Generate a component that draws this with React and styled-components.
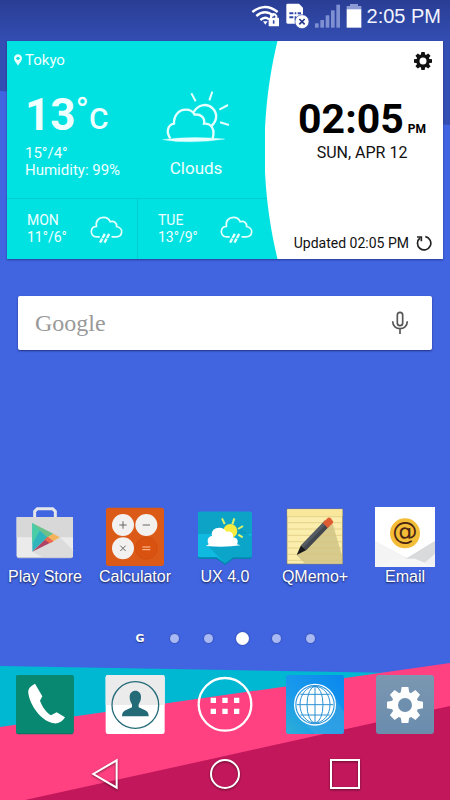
import React from 'react';
import styled, { createGlobalStyle } from 'styled-components';

const Backdrop = () => (
  <Wallpaper viewBox="0 0 450 800" preserveAspectRatio="none" aria-hidden="true">
    <defs>
      <linearGradient id="shade" x1="0" y1="0" x2="0" y2="1">
        <stop offset="0" stopColor="#293d94" />
        <stop offset="0.35" stopColor="#344fb4" />
        <stop offset="1" stopColor="#344fb4" />
      </linearGradient>
    </defs>
    <rect width="450" height="800" fill="#4164e1" />
    <path d="M0 0H450V125L0 91Z" fill="url(#shade)" />
    <path d="M0 666L400 673V800H0Z" fill="#00b8d2" />
    <path d="M0 727L450 663V800H0Z" fill="#ff4081" />
    <path d="M25 800L225 756L450 706V800Z" fill="#c2185b" />
  </Wallpaper>
);

const WifiIcon = () => (
  <svg width="29" height="24" viewBox="0 0 87 72" fill="none" stroke="#fff">
    <path d="M4 24Q42 -6 80 24M16 36Q42 14 68 36M28 48Q42 36 54 46" strokeWidth="7" />
    <path d="M36 52L43 62L50 52Z" fill="#fff" stroke="none" />
    <rect x="53" y="41" width="31" height="26" rx="2" fill="#fff" stroke="none" />
    <path d="M60 42V36Q68 24 76 36V42" strokeWidth="6" />
    <path d="M68 49V59" stroke="#3049a8" strokeWidth="5" />
  </svg>
);

const SimIcon = () => (
  <svg width="25" height="26" viewBox="0 0 75 78">
    <path d="M4 6Q4 2 8 2H42L54 14V58Q54 62 50 62H8Q4 62 4 58Z" fill="#fff" />
    <path
      d="M13 28H25V34H13ZM29 28H34V34H29ZM38 28H48V34H38ZM13 40H25V46H13ZM29 40H34V52H29Z"
      fill="#3049a8"
    />
    <circle cx="51" cy="56" r="21" fill="#fff" stroke="#3049a8" strokeWidth="2" />
    <path d="M43 48L59 64M59 48L43 64" stroke="#26398a" strokeWidth="5" />
  </svg>
);

const SignalIcon = () => (
  <svg width="26" height="24" viewBox="0 0 78 72" fill="#7e8fd2">
    <rect x="0" y="58" width="11" height="13" />
    <rect x="16" y="48" width="11" height="23" />
    <rect x="32" y="34" width="11" height="37" />
    <rect x="48" y="19" width="11" height="52" />
    <rect x="64" y="2" width="11" height="69" />
  </svg>
);

const BatteryIcon = () => (
  <svg width="16" height="24" viewBox="0 0 48 72">
    <path d="M12 0H36V6H46V18H2V6H12Z" fill="#8c9bd6" />
    <rect x="2" y="16" width="44" height="55" fill="#fff" />
  </svg>
);

const PinIcon = () => (
  <svg width="8" height="12" viewBox="0 0 24 34">
    <path d="M12 0C5 0 0 5 0 12C0 20 8 26 12 34C16 26 24 20 24 12C24 5 19 0 12 0Z" fill="#eafffe" />
    <circle cx="12" cy="12" r="5" fill="#00e2e2" />
  </svg>
);

const CloudSunIcon = () => (
  <svg width="72" height="57" viewBox="0 0 216 171" fill="none" stroke="#e4fffe" strokeWidth="7">
    <path d="M31 154C18 136 22 114 42 110C41 84 57 68 78 68C91 68 99 74 104 83C122 80 136 92 132 110C154 108 166 128 158 154" />
    <path d="M101 76C112 54 140 46 158 64C173 79 172 102 154 117" />
    <path d="M8 158Q96 146 194 156Q96 172 8 158Z" fill="#e4fffe" strokeWidth="1" />
    <path d="M94 19L107 43M157 14L148 40M178 68L204 54M180 106L207 114" strokeWidth="6" />
  </svg>
);

const RainIcon = () => (
  <svg width="33" height="27" viewBox="0 0 98 80" fill="none" stroke="#e4fffe" strokeWidth="5">
    <path d="M29 62H20C8 62 3 53 4 45C5 36 12 31 19 31C16 15 26 4 40 4C50 4 57 9 60 17C71 13 80 20 79 31C90 33 95 41 94 48C93 57 86 62 78 62H64" />
    <path d="M44 53L30 79M57 53L43 79" strokeWidth="7" strokeDasharray="14 2" />
  </svg>
);

const Gear = ({ size, color, hole }) => (
  <svg width={size} height={size} viewBox="-54 -54 108 108" fill={color}>
    <circle r="40" />
    {[0, 45, 90, 135].map(angle => (
      <path
        key={angle}
        d="M-10 -54H10L14 -30V30L10 54H-10L-14 30V-30Z"
        transform={`rotate(${angle})`}
      />
    ))}
    <circle r="21" fill={hole} />
  </svg>
);

const RefreshIcon = () => (
  <svg width="16" height="16" viewBox="0 0 48 48" fill="none" stroke="#222" strokeWidth="5">
    <path d="M28 5A20 20 0 1 1 12 9" />
    <path d="M3 6H16V19" />
  </svg>
);

const MicIcon = () => (
  <svg width="18" height="24" viewBox="0 0 54 72" fill="none" stroke="#555" strokeWidth="5">
    <rect x="19" y="4" width="16" height="40" rx="8" />
    <path d="M5 31C5 60 49 60 49 31M27 53V69" />
  </svg>
);

const PlayStoreIcon = () => (
  <Icon viewBox="0 0 180 180">
    <path d="M59 32V13L67 5H113L121 13V32" fill="none" stroke="#e4e6ea" strokeWidth="9" />
    <rect x="5" y="30" width="169" height="124" rx="6" fill="#b7bccb" />
    <path d="M5 30H174V145Q174 151 168 151H11Q5 151 5 145Z" fill="#ebebeb" />
    <path d="M5 30H174V91H5Z" fill="#d8d8d9" />
    <path d="M52 134L84 151H168Q174 151 174 145V130L135 91Z" fill="#dcdcdc" />
    <path d="M52 48L98 90L52 134Z" fill="#31b5bd" />
    <path d="M52 48L76 68L52 110Z" fill="#48cda6" />
    <path d="M52 48L115 80L98 92Z" fill="#6cc18b" />
    <path d="M115 80L135 91L115 103L98 90Z" fill="#f5b45c" />
    <path d="M52 134L98 90L115 103Z" fill="#b04465" />
    <path d="M98 90L115 103L104 109L89 98Z" fill="#ef6b4d" />
  </Icon>
);

const CalculatorIcon = () => (
  <Icon viewBox="0 0 180 180">
    <rect x="3" y="2" width="174" height="175" rx="8" fill="#dc5a18" />
    <g fill="#f3f1ef">
      <circle cx="54" cy="54" r="33" />
      <circle cx="124" cy="54" r="33" />
      <circle cx="54" cy="124" r="33" />
    </g>
    <circle cx="124" cy="124" r="33" fill="#d9520f" stroke="#cc4d10" strokeWidth="2" />
    <path
      d="M43 54H65M54 43V65M113 54H135M46 116L62 132M62 116L46 132"
      stroke="#666"
      strokeWidth="3"
    />
    <path d="M112 120H136M112 128H136" stroke="#ffc7a5" strokeWidth="3" />
  </Icon>
);

const WeatherAppIcon = () => (
  <Icon viewBox="0 0 180 180">
    <path d="M14 17H165Q170 17 170 22V150Q170 156 165 156H115L90 174L65 156H14Q9 156 9 150V22Q9 17 14 17Z" fill="#0483ad" />
    <path d="M14 14H165Q170 14 170 19V146Q170 151 165 151H115L90 169L65 151H14Q9 151 9 146V19Q9 14 14 14Z" fill="#0fb9df" />
    <path d="M14 14H165Q170 14 170 19V81H9V19Q9 14 14 14Z" fill="#0da3c6" />
    <path d="M37 115L72 151L90 169L115 151H170V90L126 56Z" fill="#0998bd" opacity="0.6" />
    <circle cx="106" cy="72" r="21" fill="#f7ec3f" />
    <path
      d="M81 34L89 51M118 34L112 52M129 66L144 57M130 83L143 91"
      stroke="#d9f36a"
      strokeWidth="6"
    />
    <path
      d="M33 117L41 112C34 98 41 87 51 87C47 70 60 62 72 62C84 62 91 67 94 74C108 71 116 80 114 91C126 91 132 102 126 112L137 115Q90 122 33 117Z"
      fill="#fff"
    />
  </Icon>
);

const MemoIcon = () => (
  <Icon viewBox="0 0 180 180">
    <rect x="6" y="6" width="167" height="165" fill="#fbedab" stroke="#807b6d" strokeWidth="2" />
    <path d="M7 7H172V28H7Z" fill="#f9e79c" />
    <path d="M35 145L143 50L172 149V170H60Z" fill="#cbbd83" opacity="0.75" />
    <path
      d="M7 29H172M7 47H172M7 66H172M7 85H172M7 104H172M7 123H172M7 142H172M7 160H172"
      stroke="#d8c57b"
      strokeWidth="2"
    />
    <path d="M120 40L134 56L63 130L48 115Z" fill="#555b62" />
    <path d="M127 48L134 56L63 130L55 122Z" fill="#42474d" />
    <path d="M113 47L129 32Q133 30 137 34L144 43Q145 47 142 50L128 63Z" fill="#df5b31" />
    <path d="M48 115L63 130L35 144Z" fill="#17191b" />
  </Icon>
);

const EmailIcon = () => (
  <Icon viewBox="0 0 180 180">
    <rect width="180" height="180" fill="#fff" />
    <path d="M0 101L96 152L180 101V180H0Z" fill="#f1f1f1" />
    <path d="M96 152L180 101V140L134 180H60L45 165Z" fill="#d9dadc" />
    <path d="M0 101L96 157L0 180Z" fill="#f4f4f4" />
    <path d="M0 180L60 155L120 155L180 180Z" fill="#f6f6f6" />
    <path d="M0 101L96 152L180 101V0H0Z" fill="#fff" />
    <circle cx="90" cy="79" r="45" fill="#f4bd38" />
    <text
      x="90"
      y="98"
      textAnchor="middle"
      fontFamily="'DejaVu Sans', sans-serif"
      fontSize="76"
      fill="#4a2513"
    >
      @
    </text>
  </Icon>
);

const PhoneIcon = () => (
  <Icon viewBox="0 0 180 180">
    <rect x="3" y="0" width="173" height="178" rx="7" fill="#097765" />
    <rect x="3" y="0" width="173" height="174" rx="7" fill="#098871" />
    <path
      d="M60 26C46 33 38 42 40 54C44 88 76 138 117 145C130 147 143 139 150 127L125 112L108 121C94 112 82 96 75 77L82 64Z"
      fill="#fff"
    />
  </Icon>
);

const ContactsIcon = () => (
  <Icon viewBox="0 0 180 180">
    <rect x="2" y="0" width="177" height="177" rx="7" fill="#fff" />
    <path d="M9 0H172Q179 0 179 7V90H2V7Q2 0 9 0Z" fill="#ebebec" />
    <circle cx="91" cy="90" r="70" fill="none" stroke="#246b78" strokeWidth="4" />
    <path
      d="M91 47C101 47 108 54 108 65C108 78 103 83 101 88V97L119 105Q131 109 131 124H51Q51 109 63 105L81 97V88C79 83 74 78 74 65C74 54 81 47 91 47Z"
      fill="#246b78"
    />
  </Icon>
);

const AppsIcon = () => (
  <Icon viewBox="0 0 180 180">
    <circle cx="90" cy="88" r="79" fill="none" stroke="#fff" strokeWidth="7" />
    <path
      d="M47 68h16v16h-16ZM82 68h16v16h-16ZM117 68h16v16h-16ZM47 101h16v16h-16ZM82 101h16v16h-16ZM117 101h16v16h-16Z"
      fill="#fff"
    />
  </Icon>
);

const BrowserIcon = () => (
  <Icon viewBox="0 0 180 180">
    <defs>
      <linearGradient id="web" x1="1" y1="0" x2="0" y2="1">
        <stop offset="0" stopColor="#0a88ee" />
        <stop offset="0.6" stopColor="#199aec" />
        <stop offset="1" stopColor="#2fb0d4" />
      </linearGradient>
    </defs>
    <rect x="3" y="0" width="174" height="177" rx="7" fill="url(#web)" />
    <path d="M46 132L90 177H170Q177 177 177 170V110L134 45Z" fill="#41a7dd" opacity="0.5" />
    <circle cx="90" cy="89" r="61" fill="#1d8fdc" stroke="#fff" strokeWidth="4" />
    <circle cx="90" cy="89" r="56" fill="#fff" />
    <g fill="none" stroke="#2b91d2" strokeWidth="3">
      <ellipse cx="90" cy="89" rx="24" ry="55" />
      <ellipse cx="90" cy="89" rx="45" ry="55" />
      <path d="M90 34V144M35 89H145M46 58H134M46 120H134" />
    </g>
  </Icon>
);

const SettingsIcon = () => (
  <SettingsTile>
    <Gear size={36} color="#fff" hole="#6e8fae" />
  </SettingsTile>
);

const BackIcon = () => (
  <svg width="30" height="34" viewBox="0 0 90 102" fill="none" stroke="#fff" strokeWidth="6">
    <path d="M80 10V92L10 51Z" />
  </svg>
);

const HomeIcon = () => (
  <svg width="32" height="34" viewBox="0 0 96 102" fill="none" stroke="#fff" strokeWidth="6">
    <circle cx="48" cy="51" r="42" />
  </svg>
);

const RecentsIcon = () => (
  <svg width="30" height="34" viewBox="0 0 90 102" fill="none" stroke="#fff" strokeWidth="6">
    <rect x="3" y="9" width="84" height="84" />
  </svg>
);

const apps = [
  { name: 'Play Store', icon: <PlayStoreIcon /> },
  { name: 'Calculator', icon: <CalculatorIcon /> },
  { name: 'UX 4.0', icon: <WeatherAppIcon /> },
  { name: 'QMemo+', icon: <MemoIcon /> },
  { name: 'Email', icon: <EmailIcon /> }
];

const favorites = [
  { name: 'Phone', icon: <PhoneIcon /> },
  { name: 'Contacts', icon: <ContactsIcon /> },
  { name: 'Apps', icon: <AppsIcon /> },
  { name: 'Browser', icon: <BrowserIcon /> },
  { name: 'Settings', icon: <SettingsIcon /> }
];

const forecast = [
  { day: 'MON', temps: '11°/6°' },
  { day: 'TUE', temps: '13°/9°' }
];

const pages = [1, 2, 3, 4, 5];

const WeatherWidget = () => (
  <Widget>
    <Weather>
      <Today>
        <Place>
          <PinIcon />
          Tokyo
        </Place>
        <Conditions>
          <div>
            <Temperature>
              13<Degree>°</Degree>
              <Unit>C</Unit>
            </Temperature>
            <Details>
              15°/4°
              <br />
              Humidity: 99%
            </Details>
          </div>
          <Sky>
            <CloudSunIcon />
            <SkyName>Clouds</SkyName>
          </Sky>
        </Conditions>
      </Today>
      <Forecast>
        {forecast.map(({ day, temps }) => (
          <Day key={day}>
            <div>
              {day}
              <br />
              {temps}
            </div>
            <RainIcon />
          </Day>
        ))}
      </Forecast>
    </Weather>
    <ClockPanel>
      <IconButton aria-label="Weather settings">
        <Gear size={18} color="#111" hole="#fff" />
      </IconButton>
      <Clock>
        <Time>
          02:05<Meridiem>PM</Meridiem>
        </Time>
        <CurrentDate>SUN, APR 12</CurrentDate>
      </Clock>
      <Updated>
        Updated 02:05 PM
        <IconButton aria-label="Refresh">
          <RefreshIcon />
        </IconButton>
      </Updated>
    </ClockPanel>
  </Widget>
);

const App = () => (
  <Screen>
    <GlobalStyle />
    <Backdrop />
    <StatusBar>
      <WifiIcon />
      <SimIcon />
      <SignalIcon />
      <BatteryIcon />
      <StatusTime>2:05 PM</StatusTime>
    </StatusBar>
    <WeatherWidget />
    <SearchBar>
      <SearchInput type="text" placeholder="Google" aria-label="Search" />
      <IconButton type="button" aria-label="Voice search">
        <MicIcon />
      </IconButton>
    </SearchBar>
    <AppRow>
      {apps.map(({ name, icon }) => (
        <AppButton key={name} aria-label={name}>
          {icon}
          <AppName>{name}</AppName>
        </AppButton>
      ))}
    </AppRow>
    <Pager>
      <BriefingMark>G</BriefingMark>
      {pages.map(page => (
        <PageDot key={page} $active={page === 3} aria-label={`Page ${page}`} />
      ))}
    </Pager>
    <Dock>
      {favorites.map(({ name, icon }) => (
        <AppButton key={name} aria-label={name}>
          {icon}
        </AppButton>
      ))}
    </Dock>
    <NavBar>
      <IconButton aria-label="Back">
        <BackIcon />
      </IconButton>
      <IconButton aria-label="Home">
        <HomeIcon />
      </IconButton>
      <IconButton aria-label="Recent apps">
        <RecentsIcon />
      </IconButton>
    </NavBar>
  </Screen>
);

export default App;

const GlobalStyle = createGlobalStyle`
  * {
    box-sizing: border-box;
  }

  body {
    font-family: Roboto, 'Liberation Sans', sans-serif;
    margin: 0;
  }

  button {
    background: none;
    border: 0;
    color: inherit;
    cursor: pointer;
    font: inherit;
    padding: 0;
  }

  svg {
    display: block;
    flex-shrink: 0;
  }
`;

const Screen = styled.div`
  display: flex;
  flex-direction: column;
  isolation: isolate;
  min-height: 100vh;
  position: relative;
`;

const Wallpaper = styled.svg`
  height: 100%;
  inset: 0;
  position: absolute;
  width: 100%;
  z-index: -1;
`;

const StatusBar = styled.header`
  align-items: center;
  color: #f2f4ff;
  display: flex;
  gap: 5px;
  height: 32px;
  justify-content: flex-end;
  padding-right: 9px;
`;

const StatusTime = styled.span`
  font-family: 'Liberation Sans', Arial, sans-serif;
  font-size: 20px;
`;

const Widget = styled.section`
  background: #00e2e2;
  box-shadow: 0 1px 2px rgba(0, 0, 40, 0.4);
  display: flex;
  margin: 9px 7px 0;
  min-height: 218px;
`;

const Weather = styled.div`
  color: #f0ffff;
  display: flex;
  flex: 0 0 271px;
  flex-direction: column;
`;

const Today = styled.div`
  flex: 1;
  padding: 10px 0 0 7px;
`;

const Place = styled.div`
  align-items: center;
  display: flex;
  font-size: 15px;
  gap: 3px;
  line-height: 18px;
`;

const Conditions = styled.div`
  display: flex;
  gap: 40px;
  padding: 18px 0 0 11px;
`;

const Temperature = styled.div`
  display: flex;
  font-size: 44px;
  font-weight: 700;
  height: 58px;
  line-height: 56px;
`;

const Degree = styled.span`
  font-size: 36px;
  font-weight: 400;
  line-height: 48px;
`;

const Unit = styled.span`
  font-size: 30px;
  font-weight: 500;
  line-height: 64px;
`;

const Details = styled.div`
  font-size: 15px;
  line-height: 17px;
`;

const Sky = styled.div`
  align-items: center;
  display: flex;
  flex-direction: column;
`;

const SkyName = styled.div`
  font-size: 17px;
  line-height: 20px;
  padding-top: 14px;
`;

const Forecast = styled.div`
  border-top: 1px solid #00cdd0;
  display: flex;
  height: 61px;
`;

const Day = styled.div`
  align-items: center;
  display: flex;
  font-size: 14px;
  justify-content: space-between;
  line-height: 17px;
  padding: 0 14px 0 20px;
  width: 130px;

  & + & {
    border-left: 1px solid #00cdd0;
  }
`;

/* the left edge bows out over the weather half */
const ClockPanel = styled.div`
  align-items: flex-end;
  background: radial-gradient(circle at 463px 50%, #fff 463px, transparent 464px);
  color: #111;
  display: flex;
  flex: 1;
  flex-direction: column;
  justify-content: space-between;
  margin-left: -13px;
  padding: 11px 11px 7px 0;
`;

const IconButton = styled.button`
  align-items: center;
  display: flex;
  justify-content: center;
`;

const Clock = styled.div`
  margin-bottom: 46px;
  padding-right: 6px;
`;

const Time = styled.div`
  color: #000;
  font-size: 41px;
  font-weight: 700;
  line-height: 48px;
`;

const Meridiem = styled.span`
  font-size: 12px;
  line-height: 16px;
  padding-left: 4px;
`;

const CurrentDate = styled.div`
  font-size: 16px;
  line-height: 20px;
  text-align: center;
`;

const Updated = styled.div`
  align-items: center;
  display: flex;
  font-size: 14px;
  gap: 7px;
  line-height: 18px;
`;

const SearchBar = styled.form`
  align-items: center;
  background: #fff;
  border-radius: 2px;
  box-shadow: 0 1px 2px rgba(0, 0, 40, 0.5);
  display: flex;
  height: 54px;
  margin: 37px 18px 0;
  padding: 0 23px 0 17px;
`;

const SearchInput = styled.input`
  background: none;
  border: 0;
  color: #555;
  flex: 1;
  font-family: 'Liberation Serif', serif;
  font-size: 24px;
  min-width: 0;
  outline: 0;
  padding: 0;

  &::placeholder {
    color: #999;
    opacity: 1;
  }
`;

const AppRow = styled.div`
  display: grid;
  grid-template-columns: repeat(5, 1fr);
  margin-top: auto;
`;

const AppButton = styled.button`
  align-items: center;
  display: flex;
  flex-direction: column;
`;

const Icon = styled.svg`
  height: 60px;
  width: 60px;
`;

const AppName = styled.span`
  color: #fff;
  font-family: 'Liberation Sans', Arial, sans-serif;
  font-size: 16px;
  line-height: 20px;
  text-shadow: 0 1px 2px rgba(0, 0, 0, 0.7);
  white-space: nowrap;
`;

const Pager = styled.nav`
  align-items: center;
  display: grid;
  grid-template-columns: repeat(6, 34px);
  height: 20px;
  justify-content: center;
  justify-items: center;
  margin: 41px 0 27px;
`;

const BriefingMark = styled.span`
  color: #fff;
  font-family: 'DejaVu Sans', sans-serif;
  font-size: 11px;
  font-weight: 700;
  text-shadow: 0 1px 1px rgba(0, 0, 0, 0.5);
`;

const PageDot = styled.button`
  && {
    background: ${props => (props.$active ? '#fff' : '#a9b9f3')};
  }
  border-radius: 50%;
  box-shadow: 0 0 2px rgba(0, 0, 0, 0.4);
  height: ${props => (props.$active ? 13 : 9)}px;
  width: ${props => (props.$active ? 13 : 9)}px;
`;

const Dock = styled.div`
  display: grid;
  grid-template-columns: repeat(5, 1fr);
`;

const SettingsTile = styled.span`
  align-items: center;
  background: linear-gradient(#7b97b1, #6a8cad);
  border-radius: 3px;
  display: flex;
  height: 59px;
  justify-content: center;
  width: 58px;
`;

const NavBar = styled.nav`
  display: flex;
  height: 52px;
  justify-content: space-between;
  margin-top: 13px;
  padding: 0 20%;

  svg {
    filter: drop-shadow(0 1px 1px rgba(0, 0, 0, 0.5));
  }
`;
